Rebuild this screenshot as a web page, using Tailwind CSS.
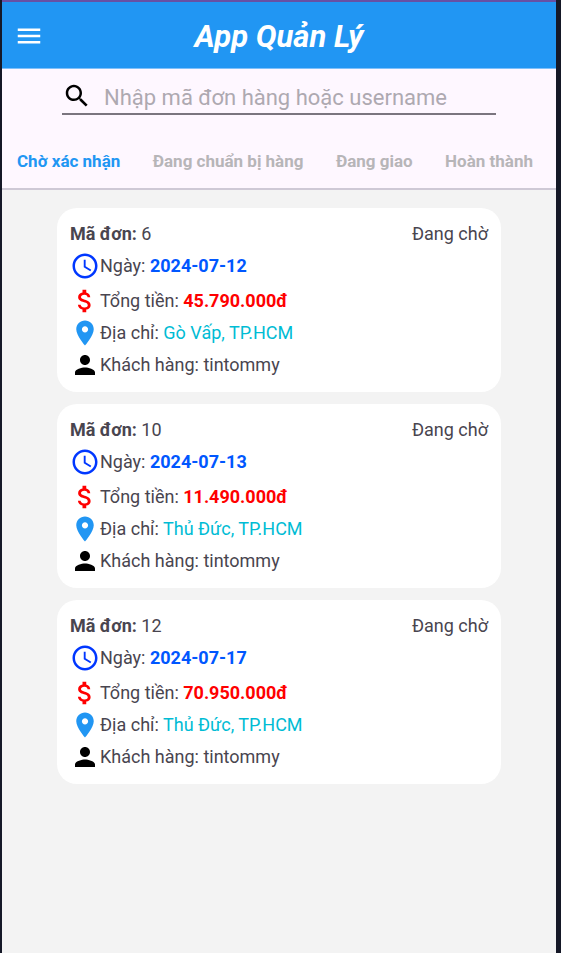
<!DOCTYPE html>
<html lang="vi">
<head>
<meta charset="utf-8">
<meta name="viewport" content="width=device-width, initial-scale=1">
<title>App Quản Lý</title>
<script src="https://cdn.jsdelivr.net/npm/@tailwindcss/browser@4"></script>
</head>
<body class="bg-[#151827] font-[Roboto,sans-serif] text-[#49454f]">
<svg class="hidden" aria-hidden="true">
  <symbol id="clock" viewBox="0 0 24 24"><path d="M11.99 2C6.47 2 2 6.48 2 12s4.47 10 9.99 10C17.52 22 22 17.52 22 12S17.52 2 11.99 2zM12 20c-4.42 0-8-3.58-8-8s3.58-8 8-8 8 3.58 8 8-3.58 8-8 8zM12.5 7H11v6l5.25 3.15.75-1.23-4.5-2.67z"/></symbol>
  <symbol id="money" viewBox="0 0 24 24"><path d="M11.8 10.9c-2.27-.59-3-1.2-3-2.15 0-1.09 1.01-1.85 2.7-1.85 1.78 0 2.44.85 2.5 2.1h2.21c-.07-1.72-1.12-3.3-3.21-3.81V3h-3v2.16c-1.94.42-3.5 1.68-3.5 3.61 0 2.31 1.91 3.46 4.7 4.13 2.5.6 3 1.48 3 2.41 0 .69-.49 1.79-2.7 1.79-2.06 0-2.87-.92-2.98-2.1h-2.2c.12 2.19 1.76 3.42 3.68 3.83V21h3v-2.15c1.95-.37 3.5-1.5 3.5-3.55 0-2.84-2.43-3.81-4.7-4.4z"/></symbol>
  <symbol id="pin" viewBox="0 0 24 24"><path d="M12 2C8.13 2 5 5.13 5 9c0 5.25 7 13 7 13s7-7.75 7-13c0-3.87-3.13-7-7-7zm0 9.5c-1.38 0-2.5-1.12-2.5-2.5s1.12-2.5 2.5-2.5 2.5 1.12 2.5 2.5-1.12 2.5-2.5 2.5z"/></symbol>
  <symbol id="person" viewBox="0 0 24 24"><path d="M12 12c2.21 0 4-1.79 4-4s-1.79-4-4-4-4 1.79-4 4 1.79 4 4 4zm0 2c-2.67 0-8 1.34-8 4v2h16v-2c0-2.66-5.33-4-8-4z"/></symbol>
</svg>
<div class="ml-[2px] mr-[5px] flex min-h-screen flex-col bg-[#f3f3f3]">
  <header class="grid h-[69px] grid-cols-[1fr_auto_1fr] items-center border-t-2 border-b border-t-[#6750a4] border-b-[#7fc0fa] bg-[#2196f3] px-3 pt-px text-white">
    <button type="button" aria-label="Menu" class="size-[30px]">
      <svg viewBox="0 0 24 24" class="size-[30px] fill-current"><path d="M3 18h18v-2H3v2zm0-5h18v-2H3v2zm0-7v2h18V6H3z"/></svg>
    </button>
    <h1 class="pt-[2px] text-[31px] leading-[40px] font-bold italic">App Quản Lý</h1>
  </header>
  <div class="border-b-2 border-[#cfc9d6] bg-[#fef7ff]">
    <form role="search" class="mx-[60px] flex h-[46px] items-center gap-3 border-b-2 border-[#7b757f] pt-[10px]">
      <label for="q" class="shrink-0">
        <svg role="img" aria-label="Tìm kiếm" viewBox="0 0 24 24" class="size-[30px] fill-black"><path d="M15.5 14h-.79l-.28-.27C15.41 12.59 16 11.11 16 9.5 16 5.91 13.09 3 9.5 3S3 5.91 3 9.5 5.91 16 9.5 16c1.61 0 3.09-.59 4.23-1.57l.27.28v.79l5 4.99L20.49 19l-4.99-5zm-6 0C7.01 14 5 11.99 5 9.5S7.01 5 9.5 5 14 7.01 14 9.5 11.99 14 9.5 14z"/></svg>
      </label>
      <input id="q" type="text" placeholder="Nhập mã đơn hàng hoặc username" class="h-[34px] min-w-0 flex-1 bg-transparent pt-[2px] text-[22px] outline-none placeholder:text-[#aea9b1]">
    </form>
    <nav class="flex justify-between pt-[31px] pr-[23px] pb-[12px] pl-[15px] text-[17px] leading-[30px] font-bold whitespace-nowrap text-[#b7b5b8]">
      <a href="#" class="text-[#2196f3]" aria-current="page">Chờ xác nhận</a>
      <a href="#">Đang chuẩn bị hàng</a>
      <a href="#">Đang giao</a>
      <a href="#">Hoàn thành</a>
    </nav>
  </div>
  <main id="orders" class="flex flex-col gap-3 px-[55px] pt-[18px]"></main>
</div>
<template id="order">
  <article class="rounded-[20px] bg-white px-[13px] pt-[10px] pb-[11px] text-[18px] leading-[32px]">
    <div class="flex justify-between"><h2><b>Mã đơn:</b> <span data-f="id"></span></h2><span>Đang chờ</span></div>
    <p class="mb-[3px] flex items-center"><svg class="size-[30px] fill-[#0037ff]"><use href="#clock"/></svg><span>Ngày: <b class="text-[#0057ff]" data-f="date"></b></span></p>
    <p class="flex items-center"><svg class="size-[30px] fill-[#ff0000]"><use href="#money"/></svg><span>Tổng tiền: <b class="text-[#ff0000]" data-f="total"></b></span></p>
    <p class="flex items-center"><svg class="size-[30px] fill-[#2196f3]"><use href="#pin"/></svg><span>Địa chỉ: <span class="text-[#00bcd4]" data-f="address"></span></span></p>
    <p class="flex items-center"><svg class="size-[30px] fill-black"><use href="#person"/></svg><span>Khách hàng: tintommy</span></p>
  </article>
</template>
<script>
const orders = [
  { id: 6, date: '2024-07-12', total: '45.790.000đ', address: 'Gò Vấp, TP.HCM' },
  { id: 10, date: '2024-07-13', total: '11.490.000đ', address: 'Thủ Đức, TP.HCM' },
  { id: 12, date: '2024-07-17', total: '70.950.000đ', address: 'Thủ Đức, TP.HCM' },
];
const tpl = document.getElementById('order');
for (const o of orders) {
  const card = tpl.content.cloneNode(true);
  card.querySelectorAll('[data-f]').forEach(el => { el.textContent = o[el.dataset.f]; });
  document.getElementById('orders').append(card);
}
</script>
</body>
</html>
